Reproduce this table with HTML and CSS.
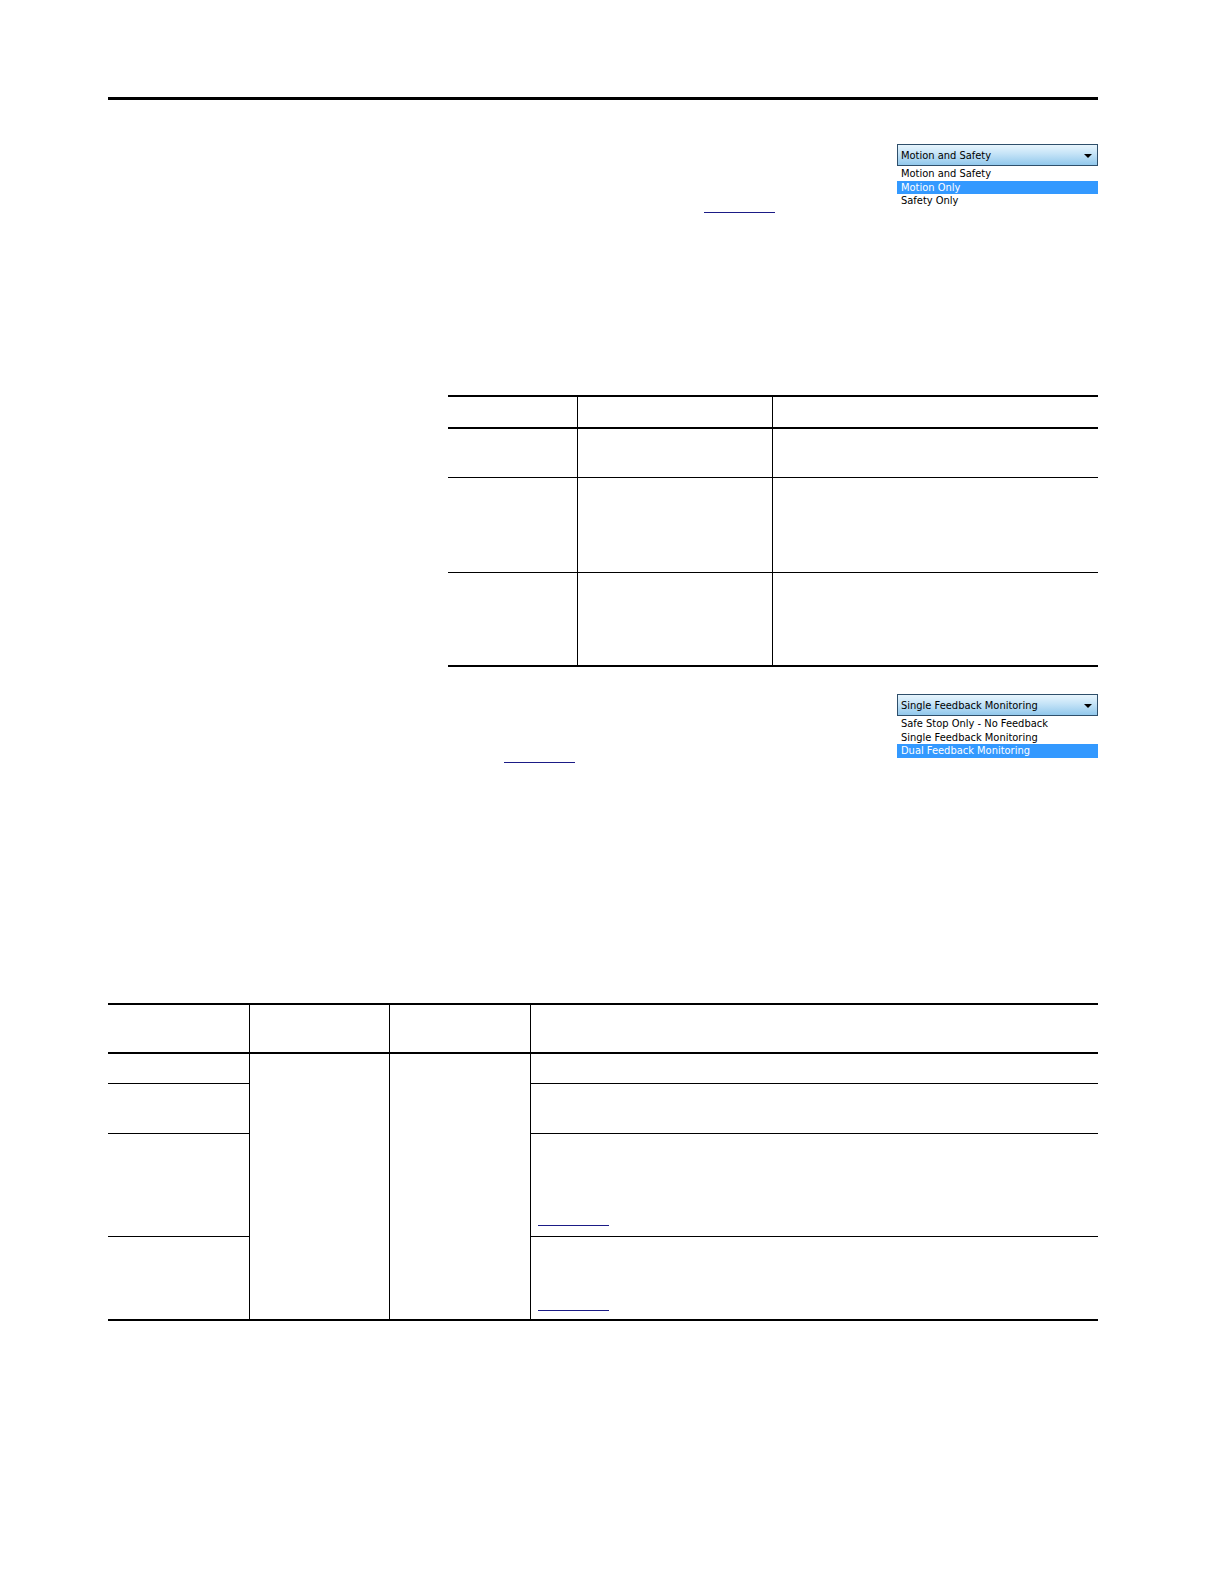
FILE: index.html
```html
<!DOCTYPE html>
<html lang="en">
<head>
<meta charset="utf-8">
<title>Page</title>
<link rel="stylesheet" href="styles.css">
</head>
<body>
<div class="page">
  <div class="rule"></div>

  <section class="sec sec1">
    <div class="text"><span class="xref xref1"></span></div>
    <div class="dropdown">
      <div class="combo"><span class="combo-value">Motion and Safety</span><span class="arrow"></span></div>
      <ul class="options">
        <li>Motion and Safety</li>
        <li class="selected">Motion Only</li>
        <li>Safety Only</li>
      </ul>
    </div>
  </section>

  <div class="tbl tbl1">
    <div class="c hd"></div><div class="c hd vl"></div><div class="c hd vl"></div>
    <div class="c rw"></div><div class="c rw vl"></div><div class="c rw vl"></div>
    <div class="c rw"></div><div class="c rw vl"></div><div class="c rw vl"></div>
    <div class="c last"></div><div class="c last vl"></div><div class="c last vl"></div>
  </div>

  <section class="sec sec2">
    <div class="text"><span class="xref xref2"></span></div>
    <div class="dropdown">
      <div class="combo"><span class="combo-value">Single Feedback Monitoring</span><span class="arrow"></span></div>
      <ul class="options">
        <li>Safe Stop Only - No Feedback</li>
        <li>Single Feedback Monitoring</li>
        <li class="selected">Dual Feedback Monitoring</li>
      </ul>
    </div>
  </section>

  <div class="tbl tbl2">
    <div class="c hd"></div><div class="c hd vl"></div><div class="c hd vl"></div><div class="c hd vl"></div>
    <div class="c rw k1 r2"></div>
    <div class="c last vl k2 span"></div>
    <div class="c last vl k3 span"></div>
    <div class="c rw vl k4 r2"></div>
    <div class="c rw k1 r3"></div>
    <div class="c rw vl k4 r3"></div>
    <div class="c rw k1 r4"></div>
    <div class="c rw vl k4 r4 p3"><span class="xref"></span></div>
    <div class="c last k1 r5"></div>
    <div class="c last vl k4 r5 p4"><span class="xref"></span></div>
  </div>
</div>
</body>
</html>
```

FILE: styles.css
```css
html, body {
  margin: 0;
  padding: 0;
  background: #ffffff;
}

.page {
  margin-left: 108px;
  width: 990px;
  padding-top: 97px;
  padding-bottom: 200px;
  font-family: "Liberation Sans", Arial, sans-serif;
  color: #000;
}

.rule {
  height: 3px;
  background: #000;
}

.sec {
  margin-left: 340px;
  display: flex;
  align-items: flex-start;
}

.sec1 { margin-top: 44px; }
.sec2 { margin-top: 27px; }

.text {
  flex: 1;
}

.xref {
  display: block;
  width: 71px;
  height: 0;
  border-bottom: 1px solid #1b1b86;
}

.xref1 { margin-left: 256px; margin-top: 68px; }
.xref2 { margin-left: 56px; margin-top: 68px; }

.dropdown {
  width: 201px;
  margin-left: auto;
  font-family: "DejaVu Sans Condensed", "DejaVu Sans", sans-serif;
  font-size: 11px;
  color: #000;
}

.combo {
  box-sizing: border-box;
  height: 22px;
  border: 1px solid #2f4f6b;
  background: linear-gradient(to bottom, #e8f5fd 0%, #c4e3f7 45%, #92c8ec 100%);
  display: flex;
  align-items: center;
  padding: 1px 5px 0 3px;
}

.arrow {
  margin-left: auto;
  width: 0;
  height: 0;
  border-left: 4px solid transparent;
  border-right: 4px solid transparent;
  border-top: 4px solid #000;
}

.options {
  list-style: none;
  margin: 0;
  padding: 1px 0 0;
  background: #fff;
}

.options li {
  height: 13.5px;
  line-height: 14px;
  padding-left: 4px;
  white-space: nowrap;
}

.options li.selected {
  background: #3399ff;
  color: #fff;
}

.tbl {
  display: grid;
}

.tbl1 {
  margin-left: 340px;
  margin-top: 182px;
  grid-template-columns: 129px 195px 1fr;
  grid-template-rows: 34px 49px 95px 94px;
}

.tbl2 {
  margin-top: 240px;
  grid-template-columns: 141px 140px 141px 1fr;
  grid-template-rows: 51px 30px 50px 103px 84px;
}

.c {
  box-sizing: border-box;
  border-color: #000;
  border-style: solid;
  border-width: 0;
}

.c.hd {
  border-top-width: 2px;
  border-bottom-width: 2px;
}

.c.rw { border-bottom-width: 1px; }
.c.last { border-bottom-width: 2px; }
.c.vl { border-left-width: 1px; }

.k1 { grid-column: 1; }
.k2 { grid-column: 2; }
.k3 { grid-column: 3; }
.k4 { grid-column: 4; }
.span { grid-row: 2 / 6; }
.r2 { grid-row: 2; }
.r3 { grid-row: 3; }
.r4 { grid-row: 4; }
.r5 { grid-row: 5; }

.p3 { padding: 91px 0 0 7px; }
.p4 { padding: 73px 0 0 7px; }
```
